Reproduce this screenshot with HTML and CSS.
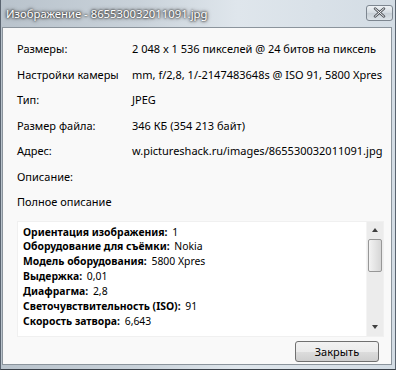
FILE: index.html
```html
<!DOCTYPE html>
<html lang="ru">
<head>
    <meta charset="UTF-8">
    <title>Изображение - 865530032011091.jpg</title>
    <link rel="stylesheet" href="styles.css">
</head>
<body>
    <div class="window">
        <div class="title-bar">
            <span class="title">Изображение - 865530032011091.jpg</span>
            <button class="close-btn" aria-label="Закрыть">
                <svg width="13" height="11" viewBox="0 0 13 11">
                    <path d="M2 1.5 L11 9.5 M11 1.5 L2 9.5" stroke="#4a4f56" stroke-width="2.4" stroke-linecap="round"/>
                    <path d="M2 1.5 L11 9.5 M11 1.5 L2 9.5" stroke="#ffffff" stroke-width="1" stroke-linecap="round"/>
                </svg>
            </button>
        </div>

        <div class="client">
            <div class="props">
                <div class="row"><span class="label">Размеры:</span><span class="value">2 048 x 1 536 пикселей @ 24 битов на пиксель</span></div>
                <div class="row"><span class="label">Настройки камеры</span><span class="value">mm, f/2,8, 1/-2147483648s @ ISO 91, 5800 Xpres</span></div>
                <div class="row"><span class="label">Тип:</span><span class="value">JPEG</span></div>
                <div class="row"><span class="label">Размер файла:</span><span class="value">346 КБ (354 213 байт)</span></div>
                <div class="row"><span class="label">Адрес:</span><span class="value">w.pictureshack.ru/images/865530032011091.jpg</span></div>
                <div class="row"><span class="label">Описание:</span><span class="value"></span></div>
                <div class="row"><span class="label">Полное описание</span><span class="value"></span></div>
            </div>

            <div class="details">
                <div class="details-text">
                    <p><b>Ориентация изображения:</b> 1</p>
                    <p><b>Оборудование для съёмки:</b> Nokia</p>
                    <p><b>Модель оборудования:</b> 5800 Xpres</p>
                    <p><b>Выдержка:</b> 0,01</p>
                    <p><b>Диафрагма:</b> 2,8</p>
                    <p><b>Светочувствительность (ISO):</b> 91</p>
                    <p><b>Скорость затвора:</b> 6,643</p>
                </div>
                <div class="scrollbar">
                    <div class="arrow up"></div>
                    <div class="track">
                        <div class="thumb"></div>
                    </div>
                    <div class="arrow down"></div>
                </div>
            </div>

            <div class="footer">
                <button class="btn">Закрыть</button>
            </div>
        </div>
    </div>
</body>
</html>
```

FILE: styles.css
```css
* {
    margin: 0;
    padding: 0;
    box-sizing: border-box;
}

body {
    width: 396px;
    height: 370px;
    overflow: hidden;
    font-family: 'Noto Sans', 'Open Sans', sans-serif;
    font-size: 11px;
    color: #000;
    background: #2b2f33;
}

.window {
    width: 396px;
    height: 370px;
    display: flex;
    flex-direction: column;
    background: linear-gradient(90deg, #b9c3cc 0%, #c9d2da 35%, #dfe6ec 60%, #d3dce4 100%);
    border-left: 1px solid #5a6470;
    border-right: 1px solid #5a6470;
    border-bottom: 1px solid #3a4048;
    padding: 0 2px 4px 1px;
}

/* title bar */
.title-bar {
    height: 27px;
    display: flex;
    align-items: center;
    justify-content: space-between;
    padding-left: 4px;
}

.title {
    font-size: 11.3px;
    color: #fff;
    text-shadow: 0 0 2px #333, 0 0 3px #444, 0 0 4px #555;
}

.close-btn {
    width: 27px;
    height: 16px;
    margin-top: -2px;
    border: 1px solid #7d8690;
    border-radius: 3px;
    background: linear-gradient(#eef2f5, #d4dbe1 50%, #c7cfd6 51%, #dce3e8);
    display: flex;
    align-items: center;
    justify-content: center;
}

/* white client area */
.client {
    flex: 1;
    display: flex;
    flex-direction: column;
    background: #f9f9f9;
    border: 1px solid #8b949c;
    margin-right: 1px;
    padding: 8px 7px 0 14px;
}

.row {
    display: flex;
    height: 25.5px;
    align-items: center;
}

.label {
    width: 115px;
    flex-shrink: 0;
    white-space: nowrap;
}

.value {
    white-space: nowrap;
}

.details {
    display: flex;
    height: 116px;
    margin-top: 6px;
    background: #fff;
    border: 1px solid #f0f0f0;
}

.details-text {
    flex: 1;
    padding: 3px 0 0 5px;
    font-size: 10.4px;
    line-height: 14.9px;
}

.details-text b {
    font-weight: 700;
    margin-right: 2px;
}

.scrollbar {
    width: 17px;
    display: flex;
    flex-direction: column;
    background: #ececec;
    border-left: 1px solid #f4f4f4;
}

.arrow {
    height: 17px;
    display: flex;
    align-items: center;
    justify-content: center;
}

.arrow::after {
    content: "";
    border-left: 3.5px solid transparent;
    border-right: 3.5px solid transparent;
}

.arrow.up::after {
    border-bottom: 4px solid #404040;
}

.arrow.down::after {
    border-top: 4px solid #404040;
}

.track {
    flex: 1;
    padding: 0 1px;
}

.thumb {
    height: 33px;
    border: 1px solid #979797;
    border-radius: 2px;
    background: linear-gradient(90deg, #f3f3f3, #e2e2e2 60%, #d6d6d6);
}

.footer {
    display: flex;
    justify-content: flex-end;
    padding: 4px 5px 0 0;
}

.btn {
    width: 84px;
    height: 21px;
    border: 1px solid #707070;
    border-radius: 3px;
    background: linear-gradient(#f2f2f2, #ebebeb 50%, #dddddd 51%, #cfcfcf);
    font-family: 'Noto Sans', 'Open Sans', sans-serif;
    font-size: 11px;
    color: #000;
}
```
